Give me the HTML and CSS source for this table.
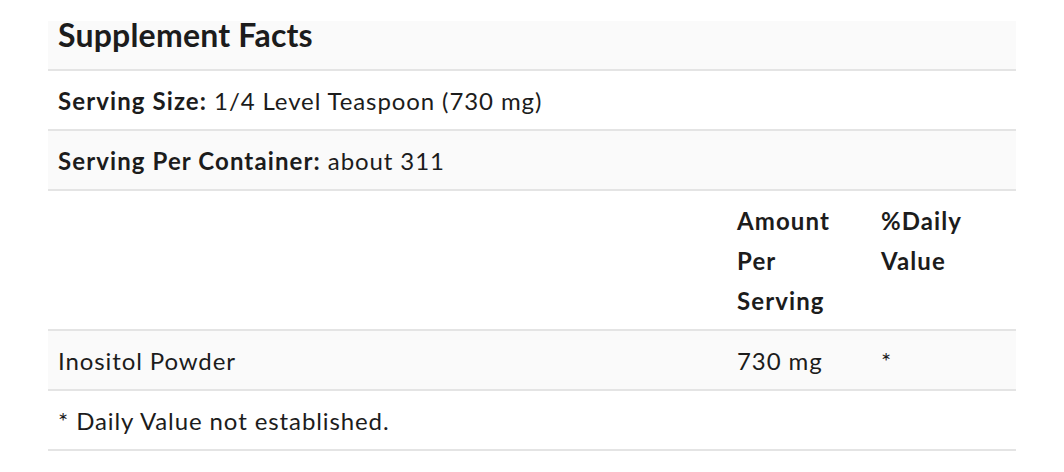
FILE: index.html
```html
<!DOCTYPE html>
<html lang="en">
<head>
<meta charset="utf-8">
<title>Supplement Facts</title>
<link rel="stylesheet" href="styles.css">
</head>
<body>
<div class="facts">
  <div class="row stripe title-row">
    <h2 class="title">Supplement Facts</h2>
  </div>
  <div class="row">
    <div class="cell"><b>Serving Size:</b> 1/4 Level Teaspoon (730 mg)</div>
  </div>
  <div class="row stripe">
    <div class="cell"><b>Serving Per Container:</b> about 311</div>
  </div>
  <div class="row grid">
    <div class="cell"></div>
    <div class="cell head">Amount<br>Per<br>Serving</div>
    <div class="cell head">%Daily<br>Value</div>
  </div>
  <div class="row grid stripe">
    <div class="cell">Inositol Powder</div>
    <div class="cell">730 mg</div>
    <div class="cell">*</div>
  </div>
  <div class="row">
    <div class="cell">* Daily Value not established.</div>
  </div>
</div>
</body>
</html>
```

FILE: styles.css
```css
html, body {
  margin: 0;
  padding: 0;
  background: #ffffff;
}

body {
  font-family: Lato, "Open Sans", "Liberation Sans", sans-serif;
  color: #1c1c1c;
}

.facts {
  width: 968px;
  margin: 21px 0 0 48px;
}

.row {
  border-bottom: 2px solid #e4e4e4;
  background: #ffffff;
}

.row.stripe {
  background: #fafafa;
}

.grid {
  display: grid;
  grid-template-columns: 679px 144px 1fr;
}

.cell {
  padding: 10px 10px 8px;
  font-size: 24px;
  line-height: 40px;
  letter-spacing: 0.9px;
}

.cell b,
.cell.head {
  font-weight: 700;
  letter-spacing: 1.1px;
}

.title-row {
  padding: 0 10px 20px;
}

.title {
  margin: 0;
  font-size: 32px;
  line-height: 28px;
  font-weight: 700;
  letter-spacing: 0.2px;
}
```
